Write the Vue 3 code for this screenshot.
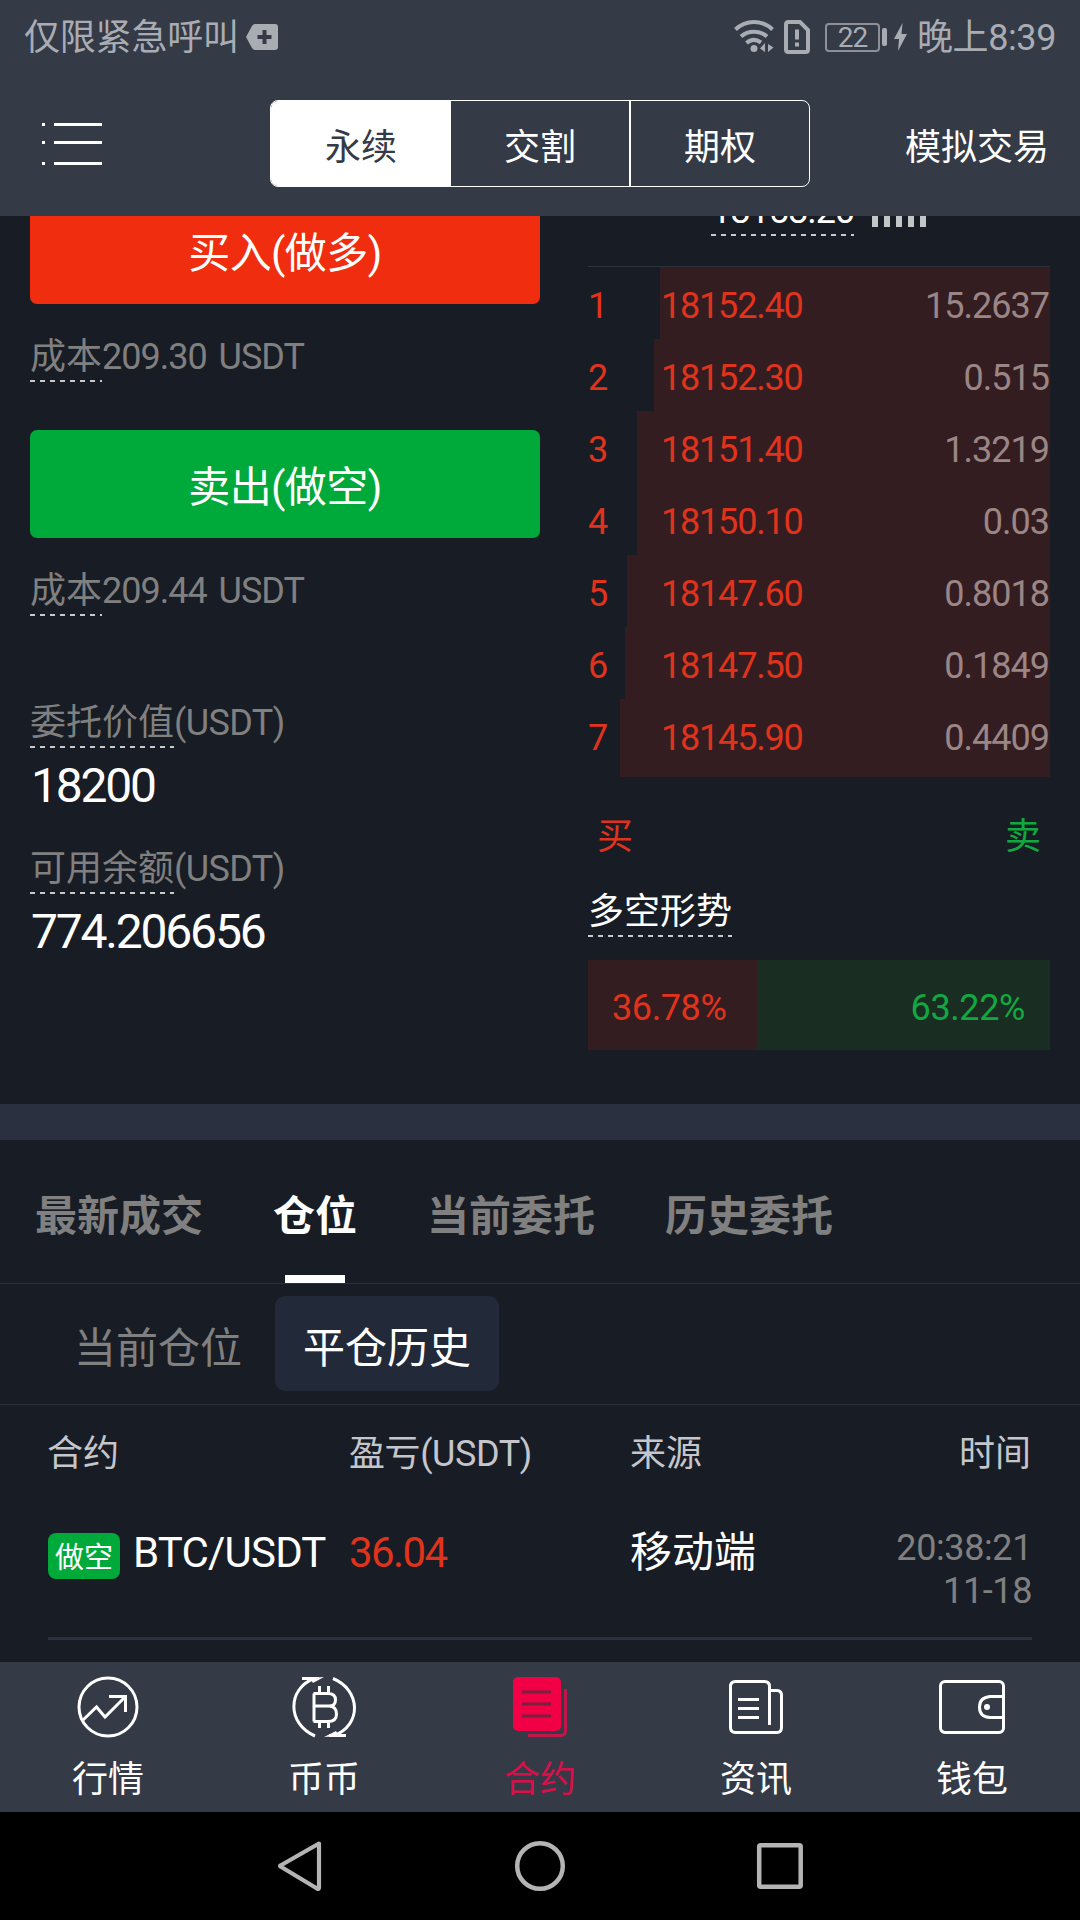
<script setup>
const segments = ['永续', '交割', '期权']
const orders = [
  { price: '18152.40', amount: '15.2637', width: 390 },
  { price: '18152.30', amount: '0.515', width: 396 },
  { price: '18151.40', amount: '1.3219', width: 413 },
  { price: '18150.10', amount: '0.03', width: 413 },
  { price: '18147.60', amount: '0.8018', width: 423 },
  { price: '18147.50', amount: '0.1849', width: 425 },
  { price: '18145.90', amount: '0.4409', width: 430 },
]
const tabs = ['最新成交', '仓位', '当前委托', '历史委托']
</script>

<template>
  <div class="screen">
    <div class="status">
      <span class="carrier">仅限紧急呼叫</span>
      <svg class="plus" width="32" height="26" viewBox="0 0 32 26">
        <path d="M9 0H29Q32 0 32 3V23Q32 26 29 26H9Q7 26 6 24L0 13L6 2Q7 0 9 0Z" fill="#a9adb3" />
        <path d="M18.5 6V20M11.5 13H25.5" stroke="#343a46" stroke-width="4" />
      </svg>
      <div class="grow"></div>
      <svg class="wifi" width="42" height="34" viewBox="0 0 42 34" fill="none" stroke="#a9adb3">
        <path d="M1.5 9.500C12-.5 28-.5 38.500 9.500M7 16.500C14 10 26 10 33 16.500M12.500 23C17 19 22 19 27 22.500" stroke-width="4" />
        <circle cx="20" cy="28.500" r="3.500" fill="#a9adb3" stroke="none" />
        <path d="M31 23V32L26 28.500ZM34 24V32L39.500 27.500Z" fill="#a9adb3" stroke="none" />
      </svg>
      <svg class="sim" width="26" height="34" viewBox="0 0 26 34" fill="none" stroke="#a9adb3" stroke-width="4">
        <path d="M4.500 2H16L24 10V29.500Q24 32 21.500 32H4.500Q2 32 2 29.500V4.500Q2 2 4.500 2Z" />
        <path d="M13 9.500V19.500M13 22.500V26.500" />
      </svg>
      <div class="battery">22</div>
      <div class="nub"></div>
      <svg class="bolt" width="13" height="28" viewBox="0 0 13 28"><path d="M8.500 0L0 16H5L4 28L13 11H7.500Z" fill="#a9adb3" /></svg>
      <span class="clock">晚上8:39</span>
    </div>

    <header class="header">
      <svg class="menu" width="61" height="42" viewBox="0 0 61 42" shape-rendering="crispEdges">
        <path d="M0 1.500H3M12 1.500H60M0 19.500H3M12 19.500H60M0 40.500H3M12 40.500H60" stroke="#fff" stroke-width="3" />
      </svg>
      <div class="segments">
        <div v-for="(s, i) in segments" :key="s" class="segment" :class="{ on: i === 0 }">{{ s }}</div>
      </div>
      <span class="demo">模拟交易</span>
    </header>

    <main class="trade">
      <section class="left">
        <div class="button buy">买入(做多)</div>
        <div class="cost"><span class="dash">成本</span>209.30 USDT</div>
        <div class="button sell">卖出(做空)</div>
        <div class="cost"><span class="dash">成本</span>209.44 USDT</div>
        <div class="label first"><span class="dash">委托价值</span>(USDT)</div>
        <div class="value">18200</div>
        <div class="label"><span class="dash">可用余额</span>(USDT)</div>
        <div class="value">774.206656</div>
      </section>

      <section class="right">
        <div class="index">
          <span class="dash num">18158.20</span>
          <div class="bars"><i v-for="n in 5" :key="n"></i></div>
        </div>
        <div class="book">
          <div v-for="(o, i) in orders" :key="i" class="order">
            <div class="depth" :style="{ width: o.width + 'px' }"></div>
            <span class="rank">{{ i + 1 }}</span>
            <span class="price">{{ o.price }}</span>
            <span class="amount">{{ o.amount }}</span>
          </div>
        </div>
        <div class="sides"><span class="red">买</span><span class="green">卖</span></div>
        <div class="trend"><span class="dash">多空形势</span></div>
        <div class="ratio">
          <div class="long">36.78%</div>
          <div class="short">63.22%</div>
        </div>
      </section>
    </main>

    <div class="band"></div>

    <nav class="tabs">
      <div v-for="(t, i) in tabs" :key="t" class="tab" :class="{ on: i === 1 }">{{ t }}</div>
    </nav>
    <div class="subtabs">
      <span class="sub">当前仓位</span>
      <span class="sub on">平仓历史</span>
    </div>

    <section class="history">
      <div class="row head">
        <span class="c1">合约</span><span class="c2">盈亏(USDT)</span><span class="c3">来源</span><span class="c4">时间</span>
      </div>
      <div class="row item">
        <div class="c1 pair"><b class="badge">做空</b><span>BTC/USDT</span></div>
        <span class="c2 profit">36.04</span>
        <span class="c3">移动端</span>
        <div class="c4 time"><div>20:38:21</div><div>11-18</div></div>
      </div>
    </section>

    <footer class="nav">
      <div class="entry">
        <svg width="72" height="64" viewBox="0 0 72 64" fill="none" stroke="#fff" stroke-width="3">
          <circle cx="36" cy="32" r="29" />
          <path d="M11 45L24.500 32L33 42L53 22M37 21.500H53.500V37" />
        </svg>
        <span>行情</span>
      </div>
      <div class="entry">
        <svg width="72" height="64" viewBox="0 0 72 64" fill="none" stroke="#fff" stroke-width="3">
          <path d="M27 61C-1 49-1 14 26 3.500M14 3.500H31M45 3.500C73 15 74 50 46 60.500M58 60.500H41" />
          <path d="M36 2L25 8L22 3ZM36 62L48 56L51 61Z" fill="#fff" stroke="none" />
          <path d="M25.500 18.500H40Q47.500 18.500 47.500 25Q47.500 31 41 31H25.500M41 31Q48.500 31.500 48.500 39Q48.500 46.500 40 46.500H25.500M26 18.500V46.500M31.500 11V18M40.500 11V18M31.500 47V53M40.500 47V53" />
        </svg>
        <span>币币</span>
      </div>
      <div class="entry active">
        <svg width="72" height="64" viewBox="0 0 72 64" fill="none">
          <rect x="9" y="2" width="48" height="54" rx="5" fill="#f20046" />
          <path d="M18 17H47M18 29H47M18 41H47" stroke="#7a203f" stroke-width="3" />
          <path d="M61.500 14V56Q61.500 60.500 56 60.500H24" stroke="#c0164a" stroke-width="3" />
        </svg>
        <span>合约</span>
      </div>
      <div class="entry">
        <svg width="72" height="64" viewBox="0 0 72 64" fill="none" stroke="#fff" stroke-width="3">
          <path d="M49.500 50V11.500Q49.500 6.500 44.500 6.500H15.500Q10.500 6.500 10.500 11.500V52.500Q10.500 57.500 15.500 57.500H57Q61.500 57.500 61.500 52.500V20.500Q61.500 15.500 57 15.500H49.500" />
          <path d="M18 24.500H39M18 33.500H39M18 42.500H39" />
        </svg>
        <span>资讯</span>
      </div>
      <div class="entry">
        <svg width="72" height="64" viewBox="0 0 72 64" fill="none" stroke="#fff" stroke-width="3">
          <rect x="4.500" y="6.500" width="63" height="51" rx="4.500" />
          <path d="M67 21.500H54Q43.500 22.500 43.500 32Q43.500 42 54 42.500H67" />
          <circle cx="51" cy="32" r="3" fill="#fff" stroke="none" />
        </svg>
        <span>钱包</span>
      </div>
    </footer>

    <div class="system">
      <svg width="240" height="60" viewBox="0 0 240 60"><path d="M139 7.500L100.500 29.500Q99.500 30 100.500 30.500L137 52.500Q139 53.500 139 51.500Z" fill="none" stroke="#b4b4b4" stroke-width="4.200" stroke-linejoin="round" /></svg>
      <svg width="240" height="60" viewBox="0 0 240 60"><circle cx="120" cy="30" r="22.800" fill="none" stroke="#b4b4b4" stroke-width="4.500" /></svg>
      <svg width="240" height="60" viewBox="0 0 240 60"><rect x="99.200" y="9.200" width="41.500" height="41.500" rx="1.500" fill="none" stroke="#b4b4b4" stroke-width="4.500" /></svg>
    </div>
  </div>
</template>

<style>
body { margin: 0; background: #000; }
</style>

<style scoped>
.screen {
  width: 1080px;
  height: 1920px;
  display: flex;
  flex-direction: column;
  overflow: hidden;
  background: #181c24;
  color: #fff;
  font-family: Roboto, "Noto Sans CJK SC", sans-serif;
  font-size: 36px;
  line-height: 46px;
  white-space: nowrap;
}
.screen > * { flex-shrink: 0; }
svg { display: block; flex-shrink: 0; }
.grow { flex: 1; }

.status {
  height: 74px;
  box-sizing: border-box;
  padding: 0 24px;
  background: #343a46;
  color: #a9adb3;
  display: flex;
  align-items: center;
}
.carrier { padding-top: 2px; letter-spacing: -.2px; }
.plus { margin-left: 7px; }
.wifi { margin-right: 8px; }
.sim { margin-right: 15px; }
.battery {
  width: 55px;
  height: 29px;
  box-sizing: border-box;
  border: 2px solid #8c9199;
  border-radius: 4px;
  font-size: 28px;
  line-height: 26px;
  letter-spacing: -1px;
  text-align: center;
}
.nub { width: 5px; height: 18px; margin-left: 2px; border-radius: 2px; background: #a9adb3; }
.bolt { margin: 0 10px 0 7px; }
.clock { padding-top: 2px; letter-spacing: -.4px; }

.header {
  height: 142px;
  box-sizing: border-box;
  padding: 26px 31px 0 42px;
  background: #343a46;
  display: flex;
  align-items: flex-start;
}
.menu { margin: 23px 167px 0 0; }
.segments {
  width: 540px;
  height: 87px;
  box-sizing: border-box;
  border: 1px solid #fff;
  border-radius: 8px;
  display: flex;
  overflow: hidden;
}
.segment { width: 178px; text-align: center; line-height: 94px; }
.segment + .segment + .segment { border-left: 2px solid #fff; }
.segment.on { width: 180px; background: #fff; color: #343a46; }
.demo { margin-left: auto; line-height: 96px; }

.dash {
  display: inline-block;
  padding-bottom: 2px;
  background: repeating-linear-gradient(90deg, #c8cacd 0 5px, transparent 5px 10px) left bottom / 100% 2px no-repeat;
}
.trade {
  height: 888px;
  overflow: hidden;
  display: flex;
}
.left { width: 510px; margin: -20px 48px 0 30px; }
.button {
  height: 108px;
  border-radius: 7px;
  font-size: 42px;
  line-height: 116px;
  letter-spacing: -.6px;
  text-align: center;
}
.buy { background: #f02d0e; }
.sell { background: #00aa3a; }
.cost, .label { height: 48px; color: #808080; letter-spacing: -.6px; }
.cost { margin: 30px 0 48px; letter-spacing: -1px; word-spacing: 4px; }
.cost .dash, .label .dash { letter-spacing: 0; }
.label.first { margin-top: 84px; }
.value { margin: 7px 0 31px 1px; font-size: 48px; line-height: 61px; height: 60px; letter-spacing: -2.2px; }

.right { width: 462px; margin-top: -28px; }
.index { height: 78px; display: flex; border-bottom: 1px solid #2c323c; padding-left: 123px; }
.num { width: 143px; height: 46px; text-align: right; letter-spacing: -1px; }
.bars { display: flex; gap: 6px; margin-left: 18px; height: 39px; }
.bars i { width: 6px; background: #c4c5c7; }
.order {
  position: relative;
  height: 72px;
  line-height: 78px;
  display: flex;
  letter-spacing: -1.2px;
  color: #e0331c;
}
.order:last-child { height: 78px; }
.depth { position: absolute; top: 0; right: 0; bottom: 0; background: #341d21; }
.rank, .price, .amount { position: relative; }
.rank { width: 73px; }
.amount { margin-left: auto; padding-right: 1px; letter-spacing: -1px; color: #9b8686; }
.sides { display: flex; justify-content: space-between; padding: 0 9px; margin-top: 37px; }
.red { color: #e0331c; }
.green { color: #12a840; }
.trend { height: 49px; margin-top: 28px; }
.trend .dash { line-height: 48px; padding-bottom: 1px; }
.ratio { display: flex; height: 90px; margin-top: 23px; line-height: 97px; letter-spacing: -.4px; }
.long { width: 145px; padding-left: 24px; background: #341d21; color: #e0331c; }
.short { flex: 1; padding-right: 25px; text-align: right; background: #1a2d23; color: #12a840; }

.band { height: 36px; background: #2a303f; }
.tabs {
  height: 143px;
  display: flex;
  gap: 70px;
  padding-left: 35px;
  border-bottom: 1px solid #2a2f3a;
  font-size: 42px;
  font-weight: 700;
  line-height: 153px;
  color: #808080;
}
.tab { position: relative; }
.tab.on { color: #fff; }
.tab.on::after {
  content: "";
  position: absolute;
  left: 50%;
  bottom: 0;
  width: 60px;
  height: 8px;
  margin-left: -30px;
  background: #fff;
}
.subtabs {
  height: 120px;
  border-bottom: 1px solid #2a2f3a;
  display: flex;
  padding-left: 46px;
  font-size: 42px;
  line-height: 105px;
  color: #808080;
}
.sub { height: 95px; margin-top: 12px; padding: 0 28px; }
.sub.on { margin-left: 5px; border-radius: 10px; background: #222a3a; color: #fff; }

.history { height: 257px; padding: 0 48px; }
.row { display: flex; }
.c1 { width: 301px; }
.c2 { width: 281px; }
.c4 { margin-left: auto; text-align: right; }
.head { padding-top: 26px; color: #c4c6cb; }
.head .c1, .head .c4 { margin-right: 1px; margin-left: -1px; }
.head .c4 { margin-left: auto; }
.head .c2 { letter-spacing: -.4px; }
.item {
  height: 114px;
  margin-top: 46px;
  border-bottom: 3px solid #2a303f;
  font-size: 42px;
  line-height: 60px;
}
.pair { display: flex; letter-spacing: -.8px; }
.badge {
  width: 72px;
  height: 46px;
  margin: 10px 13px 0 0;
  border-radius: 8px;
  background: #00aa3a;
  font-size: 29px;
  font-weight: 400;
  line-height: 50px;
  letter-spacing: 0;
  text-align: center;
}
.profit { color: #e0331c; letter-spacing: -1.6px; }
.time { padding-top: 4px; font-size: 36px; line-height: 43px; letter-spacing: -.4px; color: #808080; }

.nav { height: 150px; display: flex; background: #343a46; }
.entry { flex: 1; display: flex; flex-direction: column; align-items: center; padding-top: 13px; }
.entry span { margin-top: 17px; line-height: 48px; }
.active { color: #d8104a; }
.system { height: 108px; display: flex; justify-content: center; align-items: center; background: #000; }
</style>
